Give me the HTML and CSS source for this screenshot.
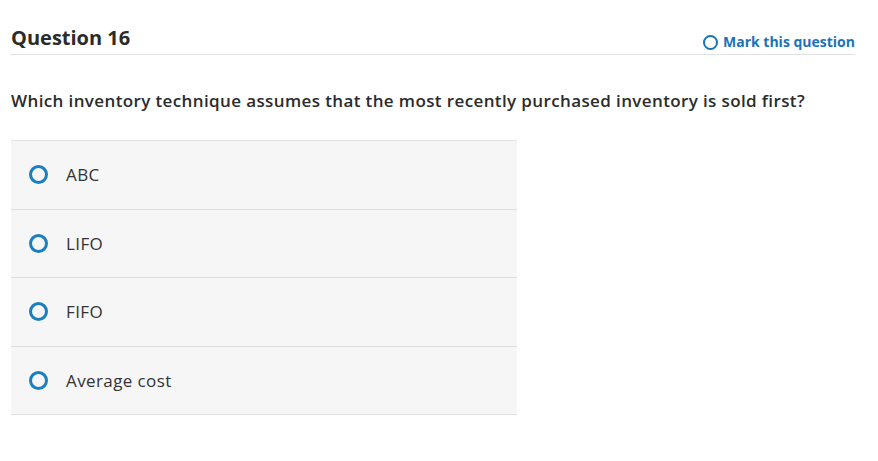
FILE: index.html
```html
<!DOCTYPE html>
<html lang="en">
<head>
    <meta charset="UTF-8">
    <title>Question 16</title>
    <link rel="stylesheet" href="styles.css">
</head>
<body>

<div class="question">
    <div class="question-header">
        <h2>Question 16</h2>
        <a class="mark" href="#"><span class="mark-circle"></span>Mark this question</a>
    </div>
    <p class="prompt">Which inventory technique assumes that the most recently purchased inventory is sold first?</p>
    <div class="choices">
        <label class="choice"><span class="radio"></span>ABC</label>
        <label class="choice"><span class="radio"></span>LIFO</label>
        <label class="choice"><span class="radio"></span>FIFO</label>
        <label class="choice"><span class="radio"></span>Average cost</label>
    </div>
</div>

</body>
</html>
```

FILE: styles.css
```css
body {
    margin: 0;
    font-family: "Open Sans", Arial, sans-serif;
    color: #333;
    background: #fff;
}
.question {
    padding: 0 23px 0 11px;
}
.question-header {
    display: flex;
    justify-content: space-between;
    align-items: flex-end;
    height: 55px;
    border-bottom: 1px solid #e0e0e0;
    box-sizing: border-box;
    padding-bottom: 3px;
}
.question-header h2 {
    margin: 0;
    font-size: 20px;
    font-weight: 700;
    color: #2b2b2b;
    line-height: 26px;
}
.mark {
    display: flex;
    align-items: center;
    gap: 5px;
    color: #1a73b8;
    font-size: 14px;
    font-weight: 700;
    text-decoration: none;
    line-height: 18px;
}
.mark-circle {
    width: 11px;
    height: 11px;
    border: 2px solid #1a73b8;
    border-radius: 50%;
}
.prompt {
    margin: 34px 0 27px;
    font-size: 17px;
    font-weight: 600;
    letter-spacing: 0.38px;
    color: #2b2b2b;
    line-height: 24px;
}
.choices {
    width: 506px;
    border-top: 1px solid #e2e2e2;
}
.choice {
    display: flex;
    align-items: center;
    gap: 18px;
    height: 67.5px;
    padding-left: 18px;
    background: #f6f6f6;
    border-bottom: 1px solid #e0e0e0;
    font-size: 17px;
    letter-spacing: 0.4px;
    color: #333;
}
.radio {
    width: 13px;
    height: 13px;
    border: 3px solid #1a7fc1;
    border-radius: 50%;
}
```
